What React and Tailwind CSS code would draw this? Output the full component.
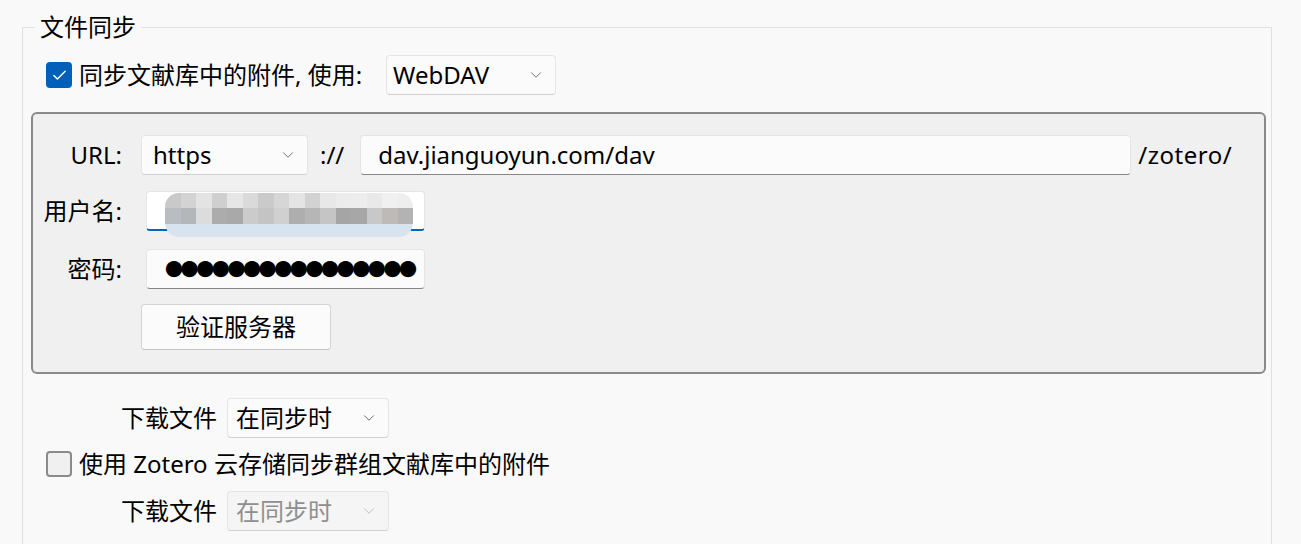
import React from "react";
import { ChevronDown, Check } from "lucide-react";

const font = {
  fontFamily: '"Noto Sans", "Noto Sans CJK SC", sans-serif',
};

const Select = ({ value, className = "", disabled = false }) => (
  <div
    className={`flex items-center justify-between h-[40px] pr-[10px] rounded-[4px] border border-[#e5e5e5] border-b-[#d0d0d0] ${
      disabled ? "bg-[#f5f5f5] text-[#8f8f8f]" : "bg-[#fbfbfb] text-black"
    } ${className}`}
  >
    <span>{value}</span>
    <ChevronDown
      size={18}
      strokeWidth={1.1}
      className={disabled ? "text-[#b5b5b5]" : "text-[#555555]"}
    />
  </div>
);

const Input = ({ children, className = "", focused = false }) => (
  <div
    className={`relative flex items-center h-[40px] pl-[17px] rounded-[4px] bg-[#fbfbfb] border border-[#e5e5e5] ${
      focused
        ? "border-b-2 border-b-[#0067c0] bg-white"
        : "border-b-[#868686]"
    } ${className}`}
  >
    {children}
  </div>
);

const mosaicTop = [
  "#c9c9c9", "#d3d3d3", "#e3e3e3", "#cfcfcf", "#e6e6e6", "#dadada", "#cacaca",
  "#d6d6d6", "#e4e4e4", "#d2d2d2", "#e8e8e8", "#ececec", "#ededed", "#e9e9e9",
  "#f0f0f0", "#eeeeee",
];
const mosaicBottom = [
  "#b9bcc0", "#b4b7ba", "#dcdcdc", "#acacac", "#a9a9a9", "#cbcbcb", "#c4c4c4",
  "#d0d0d0", "#aeaeae", "#b6b6b6", "#c5c5c5", "#a5a5a5", "#a7a7a7", "#c8c8c8",
  "#bdbab7", "#b3b3b3",
];

const Mosaic = () => (
  <div className="absolute left-[18px] top-[1px] w-[248px] h-[44px] overflow-hidden rounded-[14px] blur-[0.6px]">
    <div className="flex h-[15px]">
      {mosaicTop.map((c, i) => (
        <div key={i} className="flex-1" style={{ background: c }} />
      ))}
    </div>
    <div className="flex h-[16px]">
      {mosaicBottom.map((c, i) => (
        <div key={i} className="flex-1" style={{ background: c }} />
      ))}
    </div>
    <div className="h-[13px] bg-[#d7e3ef] rounded-b-[14px]" />
  </div>
);

export default function App() {
  return (
    <div
      className="w-[1301px] h-[544px] overflow-hidden bg-[#f9f9f9] text-[24px] leading-[32px] text-black"
      style={font}
    >
      <fieldset className="ml-[22px] mt-[11px] w-[1250px] h-[560px] border border-b-0 border-[#e0e0e0] pl-[23px] pr-[5px]">
        <legend className="ml-[-11px] px-[5px] leading-[32px]">文件同步</legend>

        {/* main checkbox row */}
        <div className="flex items-center mt-[12px] h-[40px]">
          <div className="w-[26px] h-[26px] rounded-[4px] bg-[#005fb8] flex items-center justify-center">
            <Check size={17} strokeWidth={2} className="text-white" />
          </div>
          <span className="ml-[7px]">同步文献库中的附件, 使用:</span>
          <Select value="WebDAV" className="ml-[24px] w-[170px] pl-[6px]" />
        </div>

        {/* server box */}
        <div className="mt-[17px] ml-[-15px] w-[1235px] h-[262px] rounded-[6px] border-2 border-[#8a8a8a] bg-[#f0f0f0] pt-[21px]">
          <div className="flex items-center h-[40px]">
            <span className="w-[89px] text-right">URL:</span>
            <Select value="https" className="ml-[19px] w-[167px] pl-[11px]" />
            <span className="ml-[12px]">://</span>
            <Input className="ml-[16px] w-[771px]">dav.jianguoyun.com/dav</Input>
            <span className="ml-[7px] tracking-[0.5px]">/zotero/</span>
          </div>

          <div className="flex items-center h-[40px] mt-[16px]">
            <span className="w-[89px] text-right">用户名:</span>
            <Input focused className="ml-[24px] w-[279px]">
              <Mosaic />
            </Input>
          </div>

          <div className="flex items-center h-[40px] mt-[18px]">
            <span className="w-[89px] text-right">密码:</span>
            <Input className="ml-[24px] w-[279px] pl-[18px] text-[18px] tracking-[-2.4px]">
              ●●●●●●●●●●●●●●●●
            </Input>
          </div>

          <div className="flex mt-[15px]">
            <button className="ml-[108px] w-[190px] h-[46px] rounded-[4px] border border-[#d4d4d4] border-b-[#c4c4c4] bg-[#fbfbfb]">
              验证服务器
            </button>
          </div>
        </div>

        {/* download row */}
        <div className="flex items-center h-[40px] mt-[24px]">
          <span className="ml-[75px]">下载文件</span>
          <Select value="在同步时" className="ml-[10px] w-[162px] pl-[8px]" />
        </div>

        <div className="flex items-center h-[32px] mt-[10px]">
          <div className="w-[26px] h-[26px] rounded-[4px] border-2 border-[#8a8a8a] bg-[#f0f0f0]" />
          <span className="ml-[7px]">使用 Zotero 云存储同步群组文献库中的附件</span>
        </div>

        <div className="flex items-center h-[40px] mt-[11px]">
          <span className="ml-[75px]">下载文件</span>
          <Select disabled value="在同步时" className="ml-[10px] w-[162px] pl-[8px]" />
        </div>
      </fieldset>
    </div>
  );
}
